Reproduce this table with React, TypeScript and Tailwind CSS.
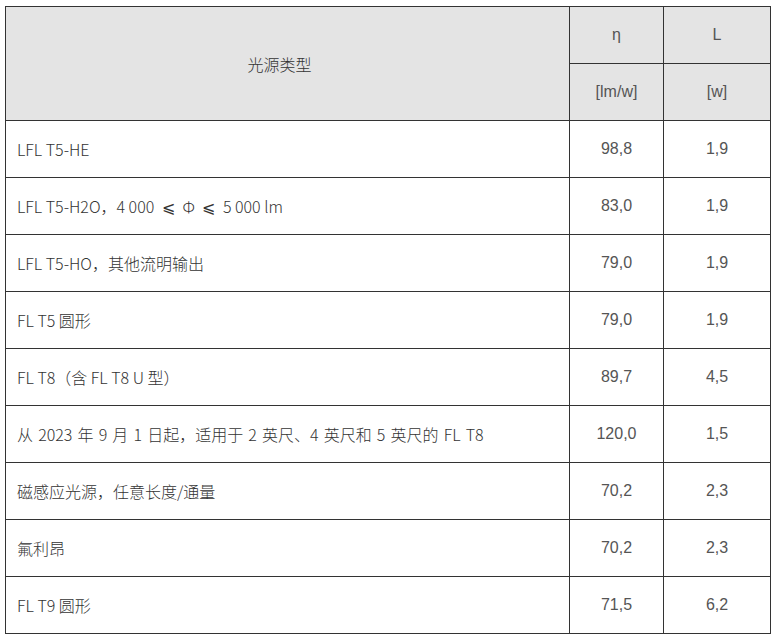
import type { ReactNode } from "react";

const Leq = () => <span className="mx-[4px]">⩽</span>;

const rows: [ReactNode, string, string, string][] = [
  ["LFL T5-HE", "98,8", "1,9", ""],
  [
    <>
      LFL T5-H2O，4 000 <Leq /> Φ <Leq /> 5 000 lm
    </>,
    "83,0",
    "1,9",
    "",
  ],
  ["LFL T5-HO，其他流明输出", "79,0", "1,9", ""],
  ["FL T5 圆形", "79,0", "1,9", ""],
  ["FL T8（含 FL T8 U 型）", "89,7", "4,5", ""],
  ["从 2023 年 9 月 1 日起，适用于 2 英尺、4 英尺和 5 英尺的 FL T8", "120,0", "1,5", "[word-spacing:1.6px]"],
  ["磁感应光源，任意长度/通量", "70,2", "2,3", ""],
  ["氟利昂", "70,2", "2,3", ""],
  ["FL T9 圆形", "71,5", "6,2", ""],
];

export default function App() {
  return (
    <div className="min-h-screen bg-white pt-[6px] pl-[5px] font-['Liberation_Sans','Noto_Sans_CJK_SC',sans-serif] text-[16px] text-[#555]">
      <table className="w-[765px] border-collapse border border-[#666] table-fixed">
        <colgroup>
          <col className="w-[564px]" />
          <col className="w-[94px]" />
          <col className="w-[107px]" />
        </colgroup>
        <thead className="bg-[#e4e4e4]">
          <tr className="h-[57px]">
            <th
              rowSpan={2}
              className="border border-[#333] pr-[16px] font-['Noto_Sans_CJK_SC',sans-serif] font-light text-center text-[#333]"
            >
              光源类型
            </th>
            <th className="border border-[#333] font-normal text-center">η</th>
            <th className="border border-[#333] font-normal text-center">L</th>
          </tr>
          <tr className="h-[57px]">
            <th className="border border-[#333] font-normal text-center">[lm/w]</th>
            <th className="border border-[#333] font-normal text-center">[w]</th>
          </tr>
        </thead>
        <tbody>
          {rows.map(([name, eta, l, extra], i) => (
            <tr key={i} className="h-[57px]">
              <td
                className={`border border-[#333] pl-[11px] font-['Noto_Sans_CJK_SC',sans-serif] font-light text-[#333] whitespace-nowrap ${extra}`}
              >
                {name}
              </td>
              <td className="border border-[#333] text-center">{eta}</td>
              <td className="border border-[#333] text-center">{l}</td>
            </tr>
          ))}
        </tbody>
      </table>
    </div>
  );
}
